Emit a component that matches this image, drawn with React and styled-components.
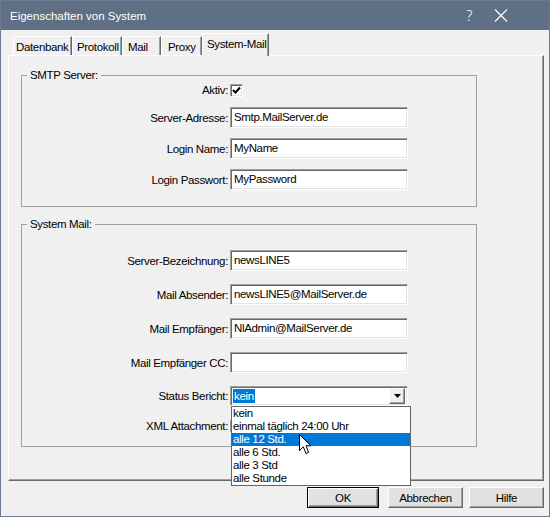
import React from "react"
import styled, { createGlobalStyle, css } from "styled-components"

const uiFont = `"Liberation Sans", Arial, sans-serif`

const GlobalStyle = createGlobalStyle`
  html, body {
    margin: 0;
    padding: 0;
    background: #f0f0f0;
  }
  * {
    box-sizing: border-box;
  }
`

const raised = css`
  border-top: 1px solid #ffffff;
  border-left: 1px solid #ffffff;
  border-right: 1px solid #696969;
  border-bottom: 1px solid #696969;
  box-shadow: inset -1px -1px 0 #a0a0a0;
`

const sunken = css`
  border-top: 1px solid #a0a0a0;
  border-left: 1px solid #a0a0a0;
  border-right: 1px solid #ffffff;
  border-bottom: 1px solid #ffffff;
  box-shadow: inset 1px 1px 0 #696969, inset -1px -1px 0 #e3e3e3;
  background: #ffffff;
`

const Window = styled.div`
  width: 550px;
  height: 517px;
  border: 1px solid #6b7a8f;
  background: #f0f0f0;
  display: flex;
  flex-direction: column;
  font-family: ${uiFont};
  font-size: 11.5px;
  letter-spacing: -0.35px;
  color: #000;
`

const TitleBar = styled.div`
  height: 29px;
  background: #5f6f84;
  color: #fff;
  display: flex;
  align-items: center;
  padding: 0 33px 0 9px;
  font-size: 11.5px;
  letter-spacing: 0;
`

const Title = styled.span`
  flex: 1;
`

const TitleButton = styled.span`
  width: 31px;
  height: 29px;
  display: flex;
  align-items: center;
  justify-content: center;
  font-family: "Noto Sans", sans-serif;
  font-size: 14px;
  font-weight: 300;
`

const Body = styled.div`
  padding: 3px 5px 0 7px;
  display: flex;
  flex-direction: column;
`

const TabRow = styled.div`
  display: flex;
  align-items: flex-end;
  height: 22px;
  padding-left: 5px;
  position: relative;
  z-index: 1;
`

const Tab = styled.div`
  width: ${(p) => p.w}px;
  height: ${(p) => (p.active ? 23 : 19)}px;
  margin-bottom: ${(p) => (p.active ? -1 : 0)}px;
  padding-left: ${(p) => p.pl}px;
  padding-top: 3px;
  line-height: 14px;
  white-space: nowrap;
  background: #f0f0f0;
  border-top: 1px solid #ffffff;
  border-left: 1px solid #ffffff;
  border-right: 1px solid #696969;
  box-shadow: inset -1px 0 0 #a0a0a0;
`

const Panel = styled.div`
  width: 536px;
  ${raised};
  padding: 13px 12px 33px 12px;
`

const Group = styled.fieldset`
  width: 456px;
  margin: ${(p) => p.top || 0}px 0 0 0;
  padding: ${(p) => p.pad};
  border: 1px solid #a0a0a0;
  min-width: 0;
`

const Legend = styled.legend`
  margin-left: 5px;
  padding: 0 3px;
  line-height: 13px;
  height: 13px;
`

const Form = styled.div`
  display: grid;
  grid-template-columns: 206px 178px;
  column-gap: 2px;
  row-gap: ${(p) => p.gap}px;
  align-items: center;
`

const Label = styled.div`
  text-align: right;
  white-space: nowrap;
  line-height: 14px;
`

const Input = styled.div`
  height: 21px;
  ${sunken};
  padding: 0 3px;
  line-height: 19px;
  white-space: nowrap;
  overflow: hidden;
`

const Box = styled.div`
  width: 13px;
  height: 13px;
  ${sunken};
  display: flex;
  align-items: center;
  justify-content: center;
`

const SelectWrap = styled.div`
  position: relative;
  height: 20px;
`

const SelectField = styled.div`
  height: 20px;
  ${sunken};
  display: flex;
  align-items: center;
  padding: 0 2px 0 2px;
`

const Selected = styled.span`
  background: #0078d7;
  color: #fff;
  padding: 0 1px;
  line-height: 14px;
`

const Spacer = styled.span`
  flex: 1;
`

const ArrowButton = styled.div`
  width: 16px;
  height: 16px;
  background: #f0f0f0;
  ${raised};
  display: flex;
  align-items: center;
  justify-content: center;
`

const List = styled.div`
  position: absolute;
  top: 20px;
  left: 1px;
  width: 180px;
  background: #fff;
  border: 1px solid #646464;
  z-index: 5;
`

const Option = styled.div`
  height: 13px;
  line-height: 13px;
  padding-left: 1px;
  white-space: nowrap;
  background: ${(p) => (p.hl ? "#0078d7" : "transparent")};
  color: ${(p) => (p.hl ? "#fff" : "#000")};
`

const Cursor = styled.svg`
  position: absolute;
  left: 67px;
  top: 27px;
`

const ButtonRow = styled.div`
  display: flex;
  justify-content: flex-end;
  gap: 6px;
  margin-top: 6px;
  width: 536px;
`

const Button = styled.div`
  width: ${(p) => p.w}px;
  height: 21px;
  margin-right: ${(p) => p.mr || 0}px;
  background: #e1e1e1;
  ${raised};
  ${(p) =>
    p.primary &&
    css`
      border: 1px solid #000;
      box-shadow: inset 1px 1px 0 #fff, inset -1px -1px 0 #696969, inset -2px -2px 0 #a0a0a0;
    `}
  display: flex;
  align-items: center;
  justify-content: center;
`

const Check = () => (
  <svg width="9" height="9" viewBox="0 0 9 9">
    <path d="M1 4 L3.5 6.5 L8 1.5" fill="none" stroke="#000" strokeWidth="2" />
  </svg>
)

const tabs = [
  { label: "Datenbank", w: 59, pl: 2 },
  { label: "Protokoll", w: 50, pl: 4 },
  { label: "Mail", w: 39, pl: 5 },
  { label: "Proxy", w: 41, pl: 6 },
  { label: "System-Mail", w: 67, pl: 4, active: true },
]

const options = ["kein", "einmal täglich 24:00 Uhr", "alle 12 Std.", "alle 6 Std.", "alle 3 Std", "alle Stunde"]

export default function App() {
  return (
    <>
      <GlobalStyle />
      <Window>
        <TitleBar>
          <Title>Eigenschaften von System</Title>
          <TitleButton>?</TitleButton>
          <TitleButton>
            <svg width="14" height="13" viewBox="0 0 14 13">
              <path d="M1 0.5 L13 12.5 M13 0.5 L1 12.5" stroke="#fff" strokeWidth="1.1" />
            </svg>
          </TitleButton>
        </TitleBar>
        <Body>
          <TabRow>
            {tabs.map((t) => (
              <Tab key={t.label} w={t.w} pl={t.pl} active={t.active}>
                {t.label}
              </Tab>
            ))}
          </TabRow>
          <Panel>
            <Group pad="1px 0 16px 0">
              <Legend>SMTP Server:</Legend>
              <Form gap={10}>
                <Label>Aktiv:</Label>
                <Box>
                  <Check />
                </Box>
                <Label>Server-Adresse:</Label>
                <Input>Smtp.MailServer.de</Input>
                <Label>Login Name:</Label>
                <Input>MyName</Input>
                <Label>Login Passwort:</Label>
                <Input>MyPassword</Input>
              </Form>
            </Group>
            <Group top={11} pad="19px 0 13px 0">
              <Legend>System Mail:</Legend>
              <Form gap={13}>
                <Label>Server-Bezeichnung:</Label>
                <Input>newsLINE5</Input>
                <Label>Mail Absender:</Label>
                <Input>newsLINE5@MailServer.de</Input>
                <Label>Mail Empfänger:</Label>
                <Input>NlAdmin@MailServer.de</Input>
                <Label>Mail Empfänger CC:</Label>
                <Input />
                <Label>Status Bericht:</Label>
                <SelectWrap>
                  <SelectField>
                    <Selected>kein</Selected>
                    <Spacer />
                    <ArrowButton>
                      <svg width="7" height="4" viewBox="0 0 7 4">
                        <path d="M0 0 H7 L3.5 4 Z" fill="#000" />
                      </svg>
                    </ArrowButton>
                  </SelectField>
                  <List>
                    {options.map((o) => (
                      <Option key={o} hl={o === "alle 12 Std."}>
                        {o}
                      </Option>
                    ))}
                    <Cursor width="13" height="21" viewBox="0 0 13 21">
                      <path
                        d="M0.5 0.5 L0.5 16.5 L4.3 12.8 L7 19.5 L9.6 18.4 L7 11.8 L12 11.8 Z"
                        fill="#fff"
                        stroke="#000"
                        strokeWidth="1"
                      />
                    </Cursor>
                  </List>
                </SelectWrap>
                <Label>XML Attachment:</Label>
                <Box />
              </Form>
            </Group>
          </Panel>
          <ButtonRow>
            <Button w={72} mr={3} primary>
              OK
            </Button>
            <Button w={75}>Abbrechen</Button>
            <Button w={75}>Hilfe</Button>
          </ButtonRow>
        </Body>
      </Window>
    </>
  )
}
